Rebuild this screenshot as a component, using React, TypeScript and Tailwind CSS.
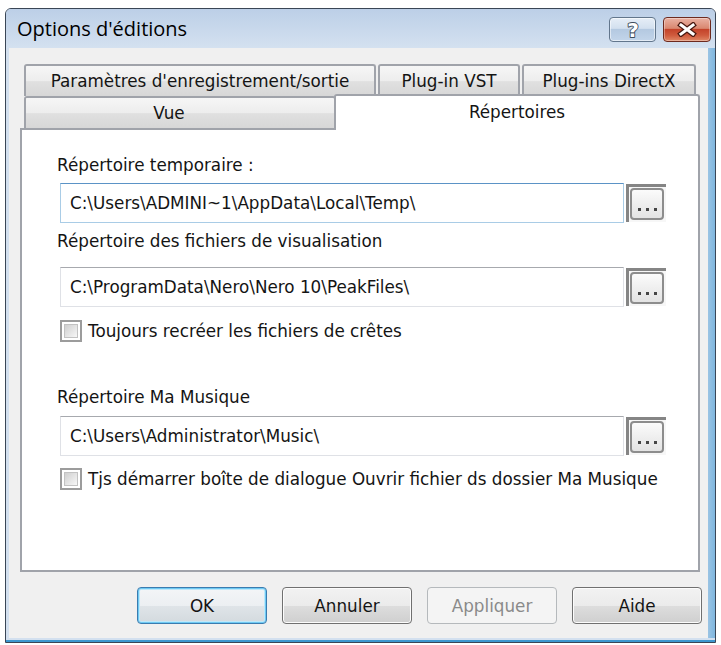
import React from "react";

const tabCls =
  "h-full flex items-center justify-center border-2 border-b-0 border-[#a0a3aa] rounded-t-[3px] bg-[linear-gradient(to_bottom,#f6f6f6_0%,#ededed_50%,#e0e0e0_52%,#d7d7d7_100%)]";

const btnBase =
  "w-[130px] h-[37px] rounded-[4px] flex items-center justify-center";

function HelpButton() {
  return (
    <div className="w-[47px] h-[25px] rounded-[4px] border border-[#62768c] bg-[linear-gradient(to_bottom,#e6eef7_0%,#d3e0ef_45%,#b4c9e1_50%,#c3d5ea_100%)] shadow-[inset_0_0_0_1px_rgba(255,255,255,0.55)] flex items-center justify-center">
      <svg width="18" height="22" viewBox="0 0 18 22">
        <text
          x="9"
          y="18"
          textAnchor="middle"
          fontFamily="DejaVu Sans, sans-serif"
          fontWeight="bold"
          fontSize="20"
          fill="#ffffff"
          stroke="#3e4c5c"
          strokeWidth="1.8"
          strokeLinejoin="round"
          paintOrder="stroke"
        >
          ?
        </text>
      </svg>
    </div>
  );
}

function CloseButton() {
  return (
    <div className="w-[48px] h-[25px] rounded-[4px] border border-[#6d2a1f] bg-[linear-gradient(to_bottom,#eab1a3_0%,#d98770_45%,#c4432a_50%,#cf5a3d_75%,#e08866_100%)] shadow-[inset_0_0_0_1px_rgba(255,255,255,0.35)] flex items-center justify-center">
      <svg width="20" height="15" viewBox="0 0 20 15">
        <path d="M4 3 L16 12 M16 3 L4 12" stroke="#4a1a12" strokeWidth="5.5" strokeLinecap="square" />
        <path d="M4 3 L16 12 M16 3 L4 12" stroke="#ffffff" strokeWidth="3" strokeLinecap="square" />
      </svg>
    </div>
  );
}

function Browse() {
  return (
    <div className="w-[40px] h-[38px] mt-[1px] border-t-[3px] border-l-[3px] border-[#858585] bg-[#f7f7f7] pt-[1px] pl-[1px] pr-[2px] pb-[2px]">
      <div className="w-full h-full rounded-[4px] border-2 border-[#8d8d8d] bg-[linear-gradient(to_bottom,#fbfbfb,#e3e3e3)] flex items-end justify-center gap-[5px] pb-[7px]">
        <span className="w-[3px] h-[3px] bg-[#454545]" />
        <span className="w-[3px] h-[3px] bg-[#454545]" />
        <span className="w-[3px] h-[3px] bg-[#454545]" />
      </div>
    </div>
  );
}

function Field({ value, focused }: { value: string; focused?: boolean }) {
  return (
    <div className="flex gap-[2px] items-start">
      <div
        className={
          focused
            ? "w-[564px] h-[40px] bg-white border border-[#a9cce6] border-t-[#5b93c6] flex items-center pl-[9px] whitespace-nowrap"
            : "w-[564px] h-[40px] bg-white border border-[#dfe1e6] border-t-[#a7a9ae] flex items-center pl-[9px] whitespace-nowrap"
        }
      >
        {value}
      </div>
      <Browse />
    </div>
  );
}

function Check({ label }: { label: string }) {
  return (
    <div className="flex items-center gap-[6px] h-[22px]">
      <div className="w-[22px] h-[22px] border-2 border-[#9c9c9c] bg-white p-[2px]">
        <div className="w-full h-full border border-[#c2c2c2] bg-[linear-gradient(135deg,#cfcfcf,#f7f7f7)]" />
      </div>
      <span className="whitespace-nowrap">{label}</span>
    </div>
  );
}

export default function App() {
  return (
    <div className="w-[721px] h-[645px] bg-white pt-[8px] pl-[5px] font-['DejaVu_Sans',sans-serif] text-[16.8px] text-[#141414] leading-[20px]">
      <div className="w-[711px] h-[635px] border border-[#3a4656] rounded-t-[6px] bg-[#cddbec] flex flex-col overflow-hidden">
        {/* Title bar */}
        <div className="h-[39px] flex items-start bg-[linear-gradient(to_bottom,#bccfe7,#d4e1f0)] pl-[11px] pr-[4px]">
          <div className="flex-1 h-full flex items-center font-['Open_Sans',sans-serif] text-[20px] text-black">
            Options d'éditions
          </div>
          <div className="flex gap-[7px] mt-[8px]">
            <HelpButton />
            <CloseButton />
          </div>
        </div>

        {/* Client */}
        <div className="flex h-[590px] pl-[3px] pr-[7px] bg-[linear-gradient(to_right,#d3e0ef,#d3e0ef_97%,#7fb6de)]">
          <div className="w-[699px] h-full bg-[#f0f0f0] flex flex-col pt-[16px]">
            {/* Tab row 1 */}
            <div className="flex h-[32px] ml-[15px] gap-[2px]">
              <div className={`${tabCls} w-[352px]`}>Paramètres d'enregistrement/sortie</div>
              <div className={`${tabCls} w-[142px]`}>Plug-in VST</div>
              <div className={`${tabCls} w-[174px]`}>Plug-ins DirectX</div>
            </div>
            {/* Tab row 2 */}
            <div className="flex h-[32px] ml-[15px] items-end">
              <div className={`${tabCls} w-[312px] pr-[22px]`}>Vue</div>
              <div className="relative z-10 -ml-[2px] -mb-[2px] h-[36px] w-[366px] bg-white border-2 border-b-0 border-[#a0a3aa] rounded-t-[3px] flex items-center justify-center pb-[2px]">
                Répertoires
              </div>
            </div>
            {/* Panel */}
            <div className="ml-[11px] w-[680px] h-[444px] border-2 border-[#a0a3aa] bg-white flex flex-col pl-[38px] pt-[25px]">
              <div className="h-[20px] -ml-[3px]">Répertoire temporaire :</div>
              <div className="mt-[8px]">
                <Field value={"C:\\Users\\ADMINI~1\\AppData\\Local\\Temp\\"} focused />
              </div>
              <div className="h-[20px] -ml-[3px] mt-[8px]">Répertoire des fichiers de visualisation</div>
              <div className="mt-[16px]">
                <Field value={"C:\\ProgramData\\Nero\\Nero 10\\PeakFiles\\"} />
              </div>
              <div className="mt-[13px]">
                <Check label="Toujours recréer les fichiers de crêtes" />
              </div>
              <div className="h-[20px] -ml-[3px] mt-[45px]">Répertoire Ma Musique</div>
              <div className="mt-[9px]">
                <Field value={"C:\\Users\\Administrator\\Music\\"} />
              </div>
              <div className="mt-[12px]">
                <Check label="Tjs démarrer boîte de dialogue Ouvrir fichier ds dossier Ma Musique" />
              </div>
            </div>
            {/* Buttons */}
            <div className="flex justify-end gap-[15px] pr-[6px] mt-[15px]">
              <div className={`${btnBase} border border-[#3a7cb0] shadow-[inset_0_0_0_1px_#6fcaf3,inset_0_0_0_2px_#bfe8fa] bg-[linear-gradient(to_bottom,#f3f5f7_0%,#eceff2_50%,#dfe4e8_52%,#d3dade_100%)]`}>
                OK
              </div>
              <div className={`${btnBase} border border-[#707070] shadow-[inset_0_0_0_1px_#fcfcfc] bg-[linear-gradient(to_bottom,#f2f2f2_0%,#ebebeb_50%,#dddddd_52%,#cfcfcf_100%)]`}>
                Annuler
              </div>
              <div className={`${btnBase} border border-[#b5b9bc] bg-[#f4f4f4] text-[#8a8a8a]`}>
                Appliquer
              </div>
              <div className={`${btnBase} border border-[#707070] shadow-[inset_0_0_0_1px_#fcfcfc] bg-[linear-gradient(to_bottom,#f2f2f2_0%,#ebebeb_50%,#dddddd_52%,#cfcfcf_100%)]`}>
                Aide
              </div>
            </div>
          </div>
        </div>

        {/* Bottom frame */}
        <div className="h-[4px] bg-[linear-gradient(to_bottom,#d3e0ef_0%,#d3e0ef_40%,#3d97cf_50%,#3d97cf_100%)]" />
      </div>
    </div>
  );
}
